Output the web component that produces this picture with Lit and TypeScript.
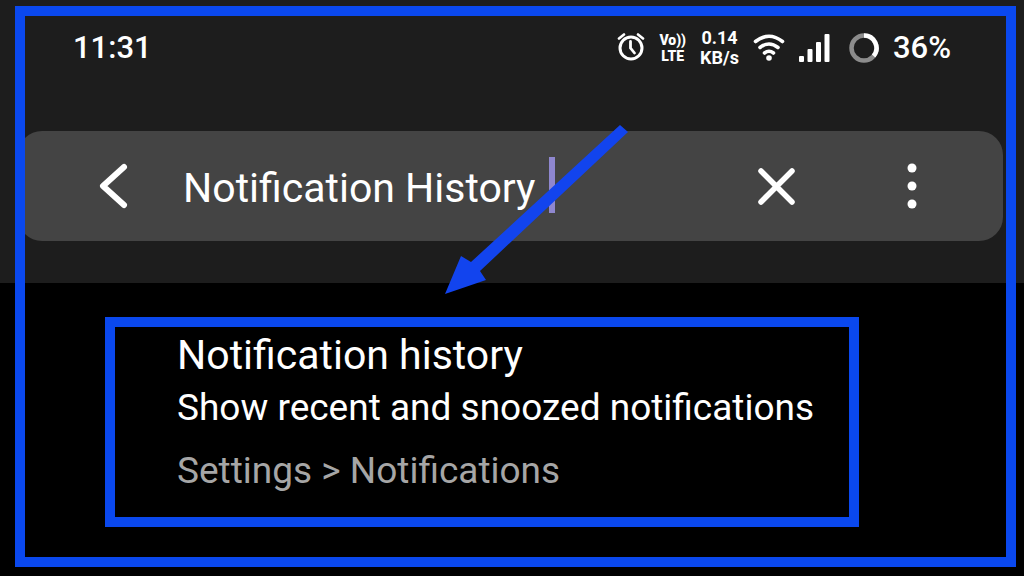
import { LitElement, html, css } from "lit";
import { customElement, state } from "lit/decorators.js";

@customElement("status-bar")
class StatusBar extends LitElement {
  static styles = css`
    :host {
      display: flex;
      align-items: center;
      justify-content: space-between;
      height: 96px;
      padding: 0 73px;
      font-size: 31px;
      font-weight: 500;
      line-height: 32px;
    }
    .icons {
      display: flex;
      align-items: center;
    }
    .icons svg {
      display: block;
    }
    .alarm {
      margin-right: 14px;
    }
    .volte {
      display: flex;
      flex-direction: column;
      align-items: center;
      margin-right: 14px;
      font-size: 14px;
      font-weight: 900;
      line-height: 16px;
    }
    .speed {
      display: flex;
      flex-direction: column;
      align-items: center;
      margin-right: 14px;
      font-size: 18px;
      font-weight: 700;
      line-height: 20px;
    }
    .wifi {
      margin-right: 14px;
    }
    .signal {
      margin-right: 19px;
    }
    .battery {
      margin-right: 14px;
    }
  `;

  render() {
    return html`
      <span>11:31</span>
      <div class="icons">
        <svg class="alarm" width="28" height="30" viewBox="0 0 28 30" fill="none" stroke="#fff" stroke-width="3" stroke-linecap="round">
          <circle cx="14" cy="15" r="11"></circle>
          <path d="M13.500 8.500V15l4 5" stroke-width="2.800"></path>
          <path d="M2 5.500L7 1.500M26 5.500L21 1.500" stroke-width="2.600"></path>
        </svg>
        <span class="volte"><span>Vo))</span><span>LTE</span></span>
        <span class="speed"><span>0.14</span><span>KB/s</span></span>
        <svg class="wifi" width="32" height="28" viewBox="0 0 32 28" fill="none" stroke="#fff" stroke-width="3.600" stroke-linecap="round">
          <path d="M2.500 7.500Q16 -3 29.500 7.500"></path>
          <path d="M7 13.500Q16 6.500 25 13.500"></path>
          <path d="M11.500 19Q16 15.500 20.500 19"></path>
          <circle cx="16" cy="24" r="2.800" fill="#fff" stroke="none"></circle>
        </svg>
        <svg class="signal" width="31" height="28" viewBox="0 0 31 28" fill="#fff">
          <rect x="0" y="22" width="5" height="6" rx="1"></rect>
          <rect x="8.500" y="15" width="5" height="13" rx="1"></rect>
          <rect x="17" y="8" width="5" height="20" rx="1"></rect>
          <rect x="25.500" y="0" width="5" height="28" rx="1"></rect>
        </svg>
        <svg class="battery" width="30" height="30" viewBox="0 0 30 30" fill="none" stroke-width="4.500">
          <circle cx="15" cy="15" r="12.500" stroke="#8c8c8c"></circle>
          <path d="M15 2.500A12.500 12.500 0 0 1 24.600 23" stroke="#fff"></path>
        </svg>
        <span>36%</span>
      </div>
    `;
  }
}

@customElement("search-bar")
class SearchBar extends LitElement {
  @state() private query = "Notification History";

  static styles = css`
    :host {
      display: flex;
      align-items: center;
      height: 110px;
      margin: 0 21px 0 18px;
      padding: 0 85px 0 78px;
      box-sizing: border-box;
      border-radius: 24px;
      background: #444;
    }
    button {
      display: block;
      flex: none;
      padding: 0;
      border: 0;
      background: none;
    }
    svg {
      display: block;
    }
    .field {
      display: flex;
      align-items: center;
      flex: 1;
      min-width: 0;
      margin-left: 51px;
    }
    input {
      field-sizing: content;
      padding: 4px 0 0;
      border: 0;
      outline: 0;
      background: none;
      color: #fff;
      font: 400 41px/56px Roboto, sans-serif;
    }
    .caret {
      width: 6px;
      height: 56px;
      margin: 0 0 2px 13px;
      background: #8f87cf;
    }
    .more {
      margin-left: 111px;
    }
  `;

  private edit(event: Event) {
    this.query = (event.target as HTMLInputElement).value;
  }

  private clear() {
    this.query = "";
  }

  render() {
    return html`
      <button aria-label="Back">
        <svg width="36" height="48" viewBox="0 0 36 48" fill="none" stroke="#fff" stroke-width="6" stroke-linecap="round" stroke-linejoin="round">
          <path d="M28 5L7 24L28 43"></path>
        </svg>
      </button>
      <div class="field">
        <input aria-label="Search settings" .value=${this.query} @input=${this.edit} />
        <span class="caret"></span>
      </div>
      <button aria-label="Clear" @click=${this.clear}>
        <svg width="38" height="38" viewBox="0 0 38 38" fill="none" stroke="#fff" stroke-width="5.500" stroke-linecap="round">
          <path d="M4 4L35 35M35 4L4 35"></path>
        </svg>
      </button>
      <button class="more" aria-label="More options">
        <svg width="12" height="48" viewBox="0 0 12 48" fill="#fff">
          <circle cx="6" cy="6" r="4.500"></circle>
          <circle cx="6" cy="24" r="4.500"></circle>
          <circle cx="6" cy="42" r="4.500"></circle>
        </svg>
      </button>
    `;
  }
}

@customElement("app-root")
class AppRoot extends LitElement {
  static styles = css`
    :host {
      display: block;
      position: relative;
      box-sizing: border-box;
      min-height: 100vh;
      overflow: hidden;
      background: #000;
      color: #fff;
      font-family: Roboto, sans-serif;
    }
    .header {
      padding-bottom: 42px;
      background: #1d1d1d;
    }
    search-bar {
      margin-top: 35px;
    }
    .result {
      display: block;
      margin: 34px 165px 48px 105px;
      padding: 0 30px 22px 62px;
      border: 10px solid #0a48ee;
      color: inherit;
      text-decoration: none;
    }
    .title,
    .summary,
    .path {
      margin: 0;
      font-weight: 400;
      white-space: nowrap;
    }
    .title {
      font-size: 41px;
      line-height: 56px;
    }
    .summary {
      font-size: 37px;
      line-height: 50px;
    }
    .path {
      margin-top: 14px;
      color: #a6a6a6;
      font-size: 37px;
      line-height: 48px;
    }
    .frame {
      position: absolute;
      inset: 6px 8px 9px 15px;
      border: 10px solid #0a48ee;
      pointer-events: none;
    }
    .arrow {
      position: absolute;
      top: 124px;
      left: 444px;
      pointer-events: none;
    }
  `;

  render() {
    return html`
      <header class="header">
        <status-bar></status-bar>
        <search-bar></search-bar>
      </header>
      <main>
        <a class="result" href="#notification-history">
          <h2 class="title">Notification history</h2>
          <p class="summary">Show recent and snoozed notifications</p>
          <p class="path">Settings &gt; Notifications</p>
        </a>
      </main>
      <div class="frame"></div>
      <svg class="arrow" width="186" height="172" viewBox="0 0 186 172" fill="#1244ee">
        <path d="M176 1L184 8L36 147L42 156L1 170L17 132L27 138Z"></path>
      </svg>
    `;
  }
}
